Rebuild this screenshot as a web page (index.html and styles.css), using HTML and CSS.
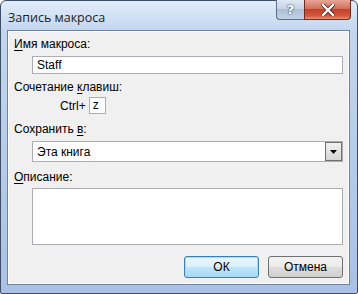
FILE: index.html
```html
<!DOCTYPE html>
<html lang="ru">
<head>
    <meta charset="UTF-8">
    <title>Запись макроса</title>
    <link rel="stylesheet" href="styles.css">
</head>
<body>
    <div class="window">
        <div class="titlebar">
            <span class="title">Запись макроса</span>
            <div class="caption-buttons">
                <div class="cap help">?</div>
                <div class="cap close">
                    <svg width="14" height="12" viewBox="0 0 14 12">
                        <path d="M2 1 L12 11 M12 1 L2 11" stroke="#5a2020" stroke-width="4" stroke-linecap="square"/>
                        <path d="M2 1 L12 11 M12 1 L2 11" stroke="#fff" stroke-width="2.4" stroke-linecap="square"/>
                    </svg>
                </div>
            </div>
        </div>
        <div class="client">
            <div class="label"><u>И</u>мя макроса:</div>
            <div class="field name">Staff</div>

            <div class="label gap-s"><span>Сочетание <u>к</u>лавиш:</span></div>
            <div class="shortcut">
                <span>Ctrl+</span>
                <div class="field key">z</div>
            </div>

            <div class="label gap">Сохранить <u>в</u>:</div>
            <div class="select">
                <span class="select-text">Эта книга</span>
                <div class="drop">
                    <svg width="7" height="4" viewBox="0 0 7 4"><path d="M0 0 H7 L3.5 4 Z" fill="#000"/></svg>
                </div>
            </div>

            <div class="label gap"><u>О</u>писание:</div>
            <div class="field memo"></div>

            <div class="actions">
                <div class="btn default">ОК</div>
                <div class="btn">Отмена</div>
            </div>
        </div>
    </div>
</body>
</html>
```

FILE: styles.css
```css
body {
    margin: 0;
    background: #fff;
    font-family: "Liberation Sans", Arial, sans-serif;
    font-size: 12px;
    color: #000;
}
.window {
    width: 358px;
    height: 294px;
    box-sizing: border-box;
    border: 1px solid #3d4e66;
    border-radius: 6px 6px 2px 2px;
    background: linear-gradient(#e2ecf8 0, #c3d6ee 30px, #a9c1e4 100%);
    padding: 0 7px 8px 6px;
    display: flex;
    flex-direction: column;
}
.titlebar {
    height: 29px;
    display: flex;
    align-items: flex-start;
    justify-content: space-between;
}
.title {
    margin-top: 8px;
    margin-left: 1px;
    font-family: "Open Sans", "Noto Sans", sans-serif;
    font-size: 12.5px;
    color: #1e1e1e;
}
.caption-buttons {
    display: flex;
    margin-top: -1px;
    margin-right: -1px;
}
.cap {
    height: 20px;
    box-sizing: border-box;
    border: 1px solid #5b6f8c;
    border-top: none;
    display: flex;
    align-items: center;
    justify-content: center;
}
.help {
    width: 28px;
    border-radius: 0 0 0 4px;
    border-right: none;
    background: linear-gradient(#dfe8f3 0, #c7d5e6 45%, #aebfd5 50%, #c3d4e8 100%);
    color: #fff;
    font-family: "DejaVu Sans", sans-serif;
    font-weight: bold;
    font-size: 13px;
    text-shadow: 0 0 2px #3a4a60, 0 0 1px #3a4a60;
}
.close {
    width: 47px;
    border-radius: 0 0 4px 0;
    border-color: #6b2a22;
    background: linear-gradient(#e7a595 0, #d4705c 45%, #c3402a 50%, #d65a3c 85%, #e89a7a 100%);
}
.client {
    flex: 1;
    background: #f0f0f0;
    border: 1px solid #6e83a3;
    box-shadow: inset 0 0 0 1px #fff;
    padding: 6px 6px 0 6px;
    display: flex;
    flex-direction: column;
}
.label {
    line-height: 15px;
    color: #000;
}
.label u {
    text-decoration-thickness: 1px;
    text-underline-offset: 2px;
}
.gap-s {
    margin-top: 6px;
}
.gap {
    margin-top: 8px;
}
.field {
    background: #fff;
    border: 1px solid #abadb3;
    box-sizing: border-box;
}
.name {
    margin: 4px 0 0 18px;
    height: 18px;
    line-height: 16px;
    padding-left: 4px;
}
.shortcut {
    display: flex;
    align-items: center;
    margin: 2px 0 0 46px;
}
.key {
    width: 17px;
    height: 17px;
    line-height: 15px;
    margin-left: 3px;
    padding-left: 3px;
}
.select {
    margin: 4px 0 0 18px;
    height: 21px;
    box-sizing: border-box;
    background: #fff;
    border: 1px solid #abadb3;
    display: flex;
    align-items: center;
    justify-content: space-between;
}
.select-text {
    padding-left: 4px;
}
.drop {
    width: 17px;
    height: 19px;
    box-sizing: border-box;
    border: 1px solid #707070;
    background: linear-gradient(#f2f2f2, #d4d4d4);
    display: flex;
    align-items: center;
    justify-content: center;
}
.memo {
    margin: 3px 0 0 18px;
    height: 57px;
}
.actions {
    display: flex;
    justify-content: flex-end;
    gap: 9px;
    margin-top: 11px;
}
.btn {
    width: 75px;
    height: 22px;
    box-sizing: border-box;
    border: 1px solid #707070;
    border-radius: 3px;
    background: linear-gradient(#f2f2f2 0, #ebebeb 50%, #dddddd 51%, #cfcfcf 100%);
    display: flex;
    align-items: center;
    justify-content: center;
}
.default {
    border-color: #3c7fb1;
    box-shadow: inset 0 0 0 1px #a6dcf6;
    background: linear-gradient(#eaf6fd 0, #d9f0fc 50%, #bee6fd 51%, #a7d9f5 100%);
}
```
